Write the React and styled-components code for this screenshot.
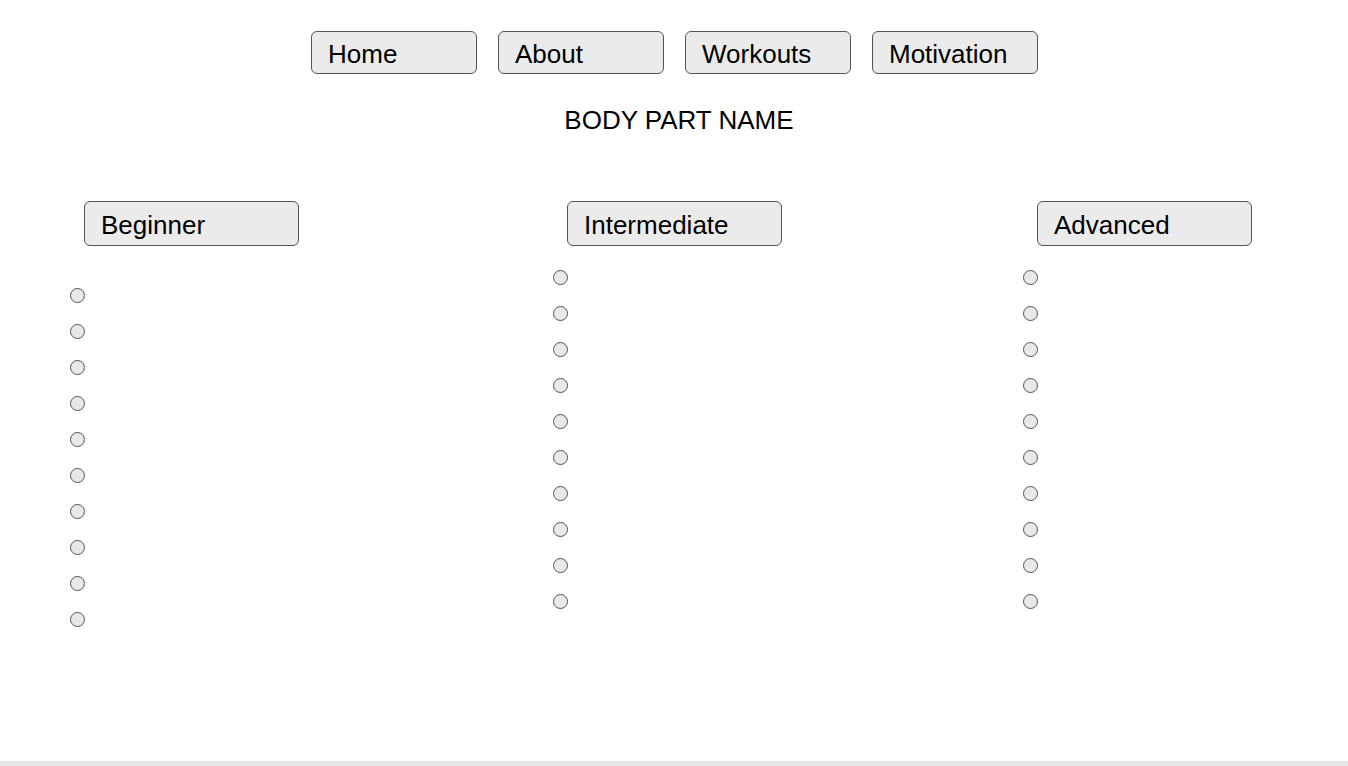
import React from 'react';
import styled, { createGlobalStyle } from 'styled-components';

const GlobalStyle = createGlobalStyle`
    html, body {
        margin: 0;
        padding: 0;
        background: #ffffff;
        font-family: "Liberation Sans", Arial, sans-serif;
        color: #000000;
    }
`;

const Page = styled.div`
    width: 100%;
    height: 766px;
    box-sizing: border-box;
    border-bottom: 5px solid #e6e6e6;
    display: flex;
    flex-direction: column;
    overflow: hidden;
`;

const Nav = styled.nav`
    display: flex;
    justify-content: center;
    gap: 21px;
    padding-top: 31px;
    padding-left: 1px;
`;

const Tab = styled.button`
    width: ${(p) => p.width}px;
    height: ${(p) => p.height}px;
    box-sizing: border-box;
    border: 1px solid #555555;
    border-radius: 6px;
    background: #ebebeb;
    font-family: "Liberation Sans", Arial, sans-serif;
    font-size: 26px;
    color: #000000;
    text-align: left;
    padding: 2px 0 0 16px;
    line-height: 1;
    cursor: pointer;
`;

const Title = styled.h1`
    margin: 28px 0 0;
    font-size: 26px;
    font-weight: normal;
    text-align: center;
    line-height: 36px;
    padding-left: 10px;
`;

const Levels = styled.div`
    display: grid;
    grid-template-columns: 483px 470px 1fr;
    padding-left: 70px;
    margin-top: 63px;
`;

const Column = styled.div`
    display: flex;
    flex-direction: column;
    align-items: flex-start;
`;

const LevelTab = styled(Tab)`
    margin-left: 14px;
`;

const List = styled.ul`
    list-style: none;
    margin: ${(p) => p.top}px 0 0;
    padding: 0;
    display: flex;
    flex-direction: column;
    gap: 21px;
`;

const Radio = styled.li`
    width: 15px;
    height: 15px;
    box-sizing: border-box;
    border: 1px solid #555555;
    border-radius: 50%;
    background: #e8e8e8;
`;

const levels = [
    { name: 'Beginner', top: 42 },
    { name: 'Intermediate', top: 24 },
    { name: 'Advanced', top: 24 },
];

const items = Array.from({ length: 10 }, (_, i) => i);

const App = () => (
    <Page>
        <GlobalStyle />
        <Nav>
            {['Home', 'About', 'Workouts', 'Motivation'].map((label) => (
                <Tab key={label} width={166} height={43}>{label}</Tab>
            ))}
        </Nav>
        <Title>BODY PART NAME</Title>
        <Levels>
            {levels.map((level) => (
                <Column key={level.name}>
                    <LevelTab width={215} height={45}>{level.name}</LevelTab>
                    <List top={level.top}>
                        {items.map((i) => <Radio key={i} />)}
                    </List>
                </Column>
            ))}
        </Levels>
    </Page>
);

export default App;
